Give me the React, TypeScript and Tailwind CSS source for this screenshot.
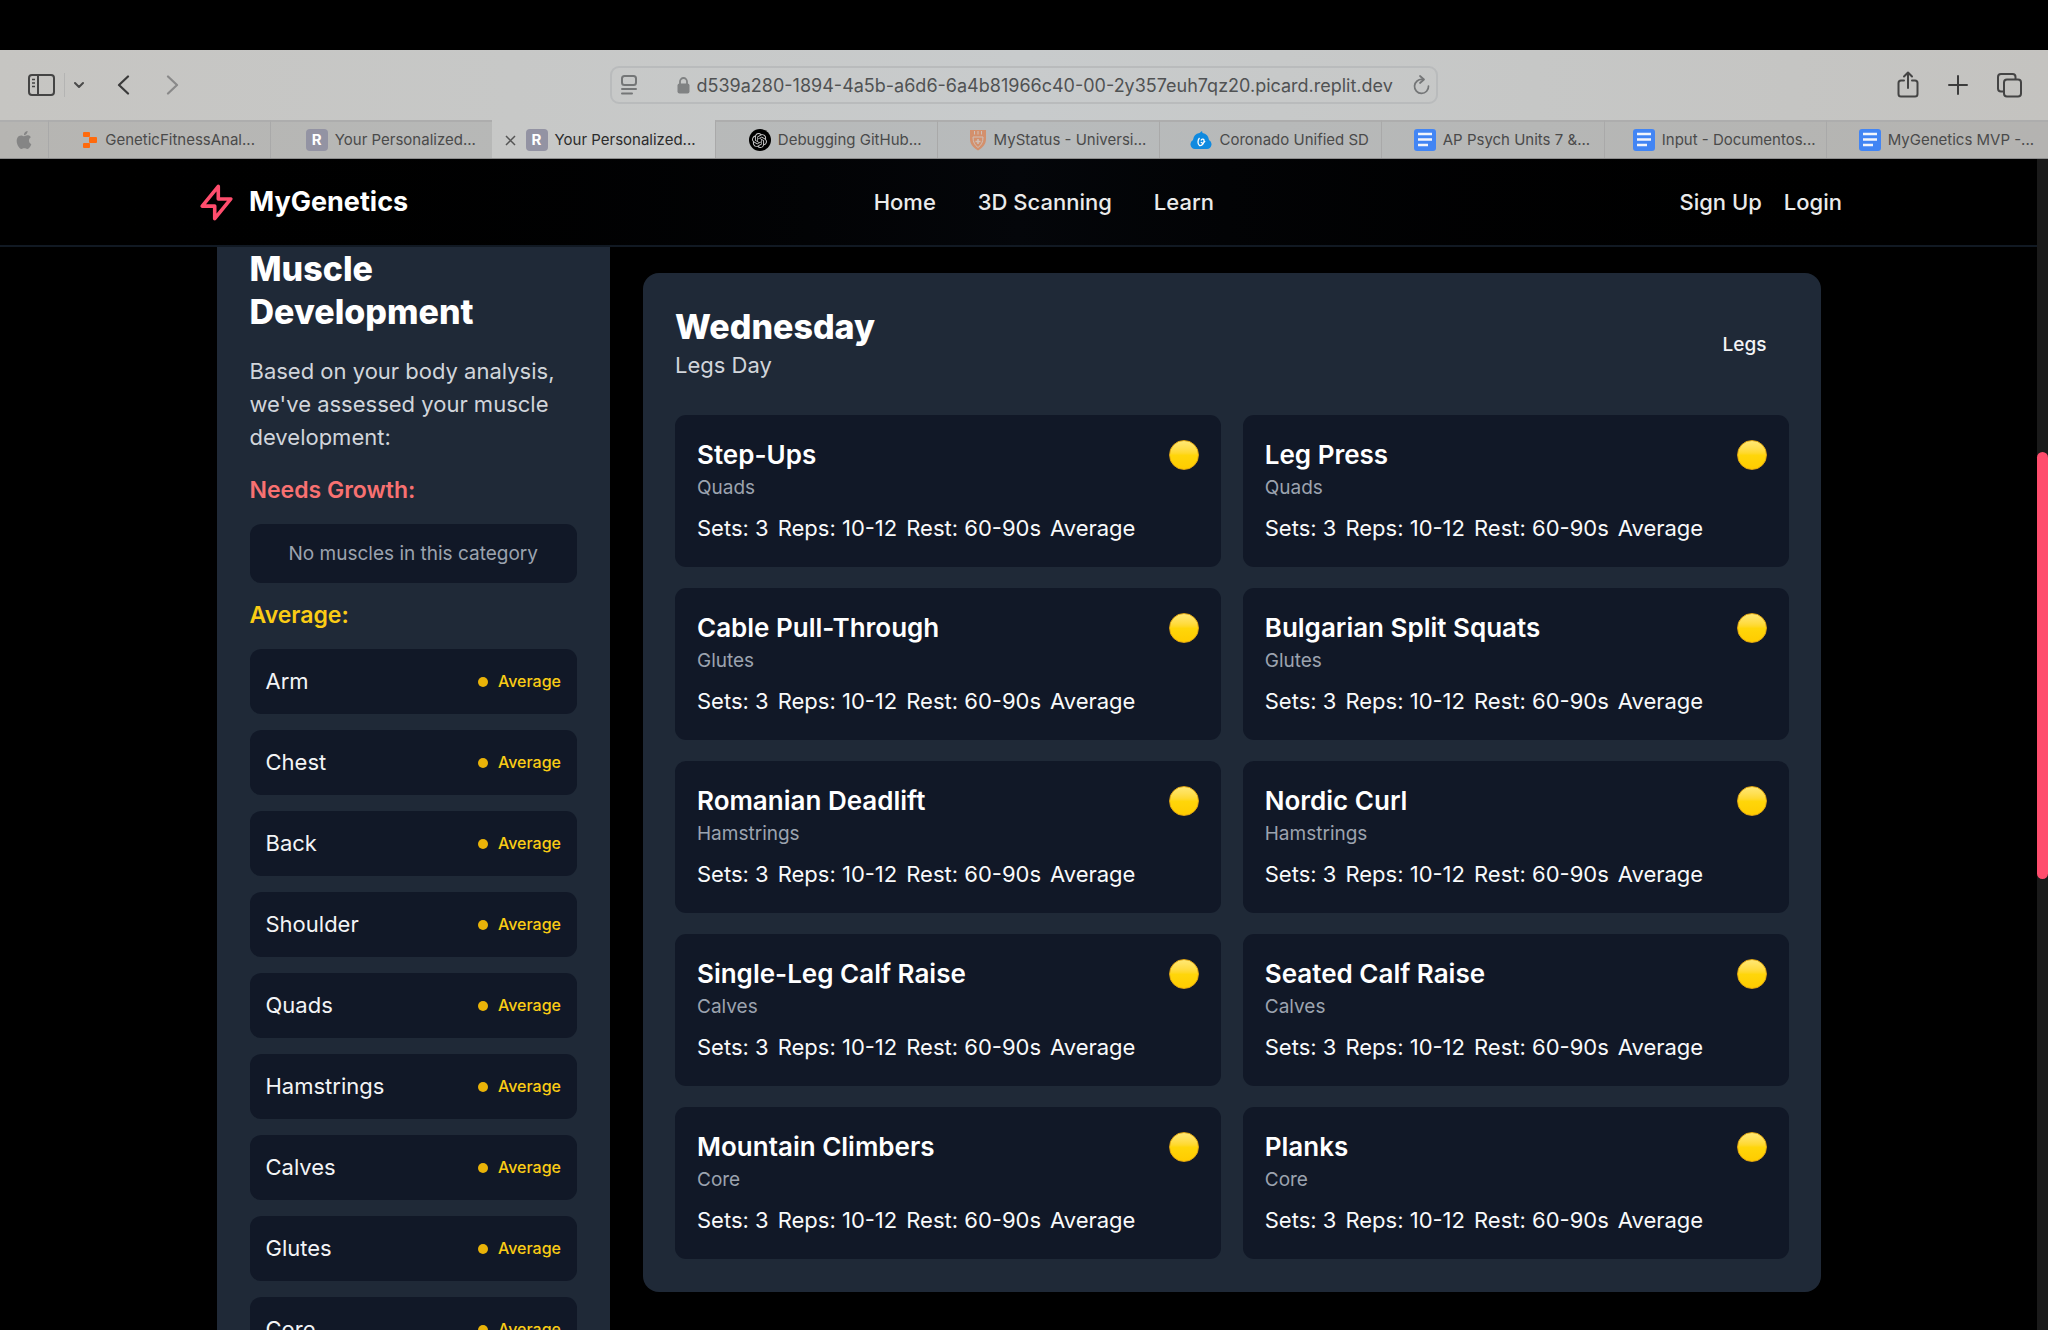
import React from "react";
import { SiOpenai, SiApple } from "react-icons/si";

const inter = "font-['Inter',sans-serif]";

type TabInfo = { icon: string; label: string; active?: boolean };

const tabs: TabInfo[] = [
  { icon: "replit", label: "GeneticFitnessAnal..." },
  { icon: "r", label: "Your Personalized..." },
  { icon: "r", label: "Your Personalized...", active: true },
  { icon: "openai", label: "Debugging GitHub..." },
  { icon: "shield", label: "MyStatus - Universi..." },
  { icon: "cloud", label: "Coronado Unified SD" },
  { icon: "doc", label: "AP Psych Units 7 &..." },
  { icon: "doc", label: "Input - Documentos..." },
  { icon: "doc", label: "MyGenetics MVP -..." },
];

function Favicon({ kind }: { kind: string }) {
  if (kind === "replit")
    return (
      <svg className="h-[22px] w-[16px] shrink-0" viewBox="0 0 16 22" fill="#ff6a0d">
        <rect x="1" y="3" width="7" height="5" rx="1" />
        <rect x="7" y="8" width="8" height="6" rx="1" />
        <rect x="1" y="14" width="7" height="5" rx="1" />
      </svg>
    );
  if (kind === "r")
    return (
      <span className="flex h-[22px] w-[22px] shrink-0 items-center justify-center rounded-[4px] bg-[#9393a3] text-[15px] font-bold text-white">
        R
      </span>
    );
  if (kind === "openai")
    return (
      <span className="flex h-[22px] w-[22px] shrink-0 items-center justify-center rounded-full bg-black text-[#c9c9ca]">
        <SiOpenai className="h-[15px] w-[15px]" />
      </span>
    );
  if (kind === "shield")
    return (
      <svg className="h-[22px] w-[18px] shrink-0" viewBox="0 0 18 22">
        <path d="M1 1h16v9c0 6-4 9-8 11.500c-4-2.500-8-5.500-8-11.500z" fill="#d3906c" />
        <path d="M5.500 2v3.500M9 2v3.500M12.500 2v3.500M4 8h10c0 5-1.500 8-5 10.500c-3.500-2.500-5-5.500-5-10.500z" fill="none" stroke="#cfc0b8" strokeWidth="1" />
        <path d="M9 10v5M6.500 12.500h5" stroke="#cfc0b8" strokeWidth="1.500" />
      </svg>
    );
  if (kind === "cloud")
    return (
      <svg className="h-[20px] w-[22px] shrink-0" viewBox="0 0 22 20">
        <path d="M5 19a4.800 4.800 0 0 1-2-9A8 8 0 0 1 9.500 3L12 1l.5 2a7.500 7.500 0 0 1 6.500 7A4.800 4.800 0 0 1 17 19z" fill="#0f8ae0" />
        <path d="M9.500 8c-2 2-2 6 0 7.500c3 .5 5-3 4.500-5.500c-.5-1.500-2.500-1-3 .5M11 12c1 2 3 1 4-1" fill="none" stroke="#fff" strokeWidth="1.300" />
      </svg>
    );
  return (
    <svg className="h-[22px] w-[22px] shrink-0" viewBox="0 0 22 22">
      <rect width="22" height="22" rx="3" fill="#4285f4" />
      <path d="M4 5h14M4 10.500h14M4 16h10" stroke="#f3f5fb" strokeWidth="2.600" />
    </svg>
  );
}

function Browser() {
  const btn = "flex items-center justify-center shrink-0";
  return (
    <div className="bg-linear-to-r from-[#c6c5c2] via-[#c8cbcc] to-[#c4c3c0] text-[#3c3c3c]">
      <div className="grid h-[70px] grid-cols-[1fr_828px_1fr] items-center">
        <div className="flex items-center pl-[28px]">
          <button aria-label="Show sidebar" className={btn}>
            <svg className="h-[22px] w-[27px]" viewBox="0 0 27 22" fill="none" stroke="#444" strokeWidth="2">
              <rect x="1" y="1" width="25" height="20" rx="3" />
              <path d="M10 1v20" />
              <path d="M4 5.500h3M4 9h3M4 12.500h3" strokeWidth="1.500" />
            </svg>
          </button>
          <span className="ml-[9px] h-6 w-px bg-[#b4b4b3]" />
          <button aria-label="Sidebar menu" className={btn + " ml-[9px]"}>
            <svg className="h-[8px] w-[10px]" viewBox="0 0 10 8" fill="none" stroke="#4a4a4a" strokeWidth="2" strokeLinecap="round" strokeLinejoin="round">
              <path d="M1 2L5 6L9 2" />
            </svg>
          </button>
          <button aria-label="Back" className={btn + " ml-[33px]"}>
            <svg className="h-[20px] w-[13px]" viewBox="0 0 13 20" fill="none" stroke="#3a3a3a" strokeWidth="2.200" strokeLinecap="round" strokeLinejoin="round">
              <path d="M11 1.500L2 10L11 18.500" />
            </svg>
          </button>
          <button aria-label="Forward" className={btn + " ml-[36px]"}>
            <svg className="h-[20px] w-[13px]" viewBox="0 0 13 20" fill="none" stroke="#898989" strokeWidth="2.200" strokeLinecap="round" strokeLinejoin="round">
              <path d="M2 1.500L11 10L2 18.500" />
            </svg>
          </button>
        </div>
        <div className="flex h-[38px] items-center rounded-[9px] border-2 border-[#b9bbbc] pr-[6px] pl-[8px]">
          <button aria-label="Reader" className={btn}>
            <svg className="h-[20px] w-[18px]" viewBox="0 0 18 20" fill="none" stroke="#747677" strokeWidth="2" strokeLinecap="round">
              <rect x="2" y="1" width="14" height="9" rx="2.500" />
              <path d="M2 14h14M2 18.500h10" />
            </svg>
          </button>
          <div className="flex flex-1 items-center justify-center gap-[7px] pl-[26px]">
            <svg className="h-[18px] w-[13px] shrink-0" viewBox="0 0 13 18">
              <path d="M3 9V5.500a3.500 3.500 0 0 1 7 0V9" fill="none" stroke="#808283" strokeWidth="1.800" />
              <rect x="0.500" y="7.500" width="12" height="10" rx="2" fill="#808283" />
            </svg>
            <input
              aria-label="Address"
              readOnly
              value="d539a280-1894-4a5b-a6d6-6a4b81966c40-00-2y357euh7qz20.picard.replit.dev"
              className="w-[704px] bg-transparent text-[18px] text-[#505253] outline-none"
            />
          </div>
          <button aria-label="Reload" className={btn}>
            <svg className="h-[20px] w-[17px]" viewBox="0 0 17 20" fill="none" stroke="#747677" strokeWidth="1.700" strokeLinecap="round" strokeLinejoin="round">
              <path d="M9.500 4.500A7 7 0 1 0 15.500 11" />
              <path d="M7 1l4 3.500L7 8" />
            </svg>
          </button>
        </div>
        <div className="flex items-center justify-end gap-[29px] pr-[26px]">
          <button aria-label="Share" className={btn}>
            <svg className="h-[28px] w-[22px]" viewBox="0 0 22 28" fill="none" stroke="#444" strokeWidth="2" strokeLinecap="round" strokeLinejoin="round">
              <path d="M7 9.500H4a2.500 2.500 0 0 0-2.500 2.500v11A2.500 2.500 0 0 0 4 25.500h14a2.500 2.500 0 0 0 2.500-2.500V12A2.500 2.500 0 0 0 18 9.500h-3" />
              <path d="M11 17V2M7 5.500L11 1.500L15 5.500" />
            </svg>
          </button>
          <button aria-label="New tab" className={btn}>
            <svg className="h-[20px] w-[20px]" viewBox="0 0 20 20" fill="none" stroke="#3c3c3c" strokeWidth="2" strokeLinecap="round">
              <path d="M10 1v18M1 10h18" />
            </svg>
          </button>
          <button aria-label="Tab overview" className={btn}>
            <svg className="h-[25px] w-[25px]" viewBox="0 0 25 25" fill="none" stroke="#444" strokeWidth="2" strokeLinejoin="round">
              <rect x="7" y="6.500" width="17" height="17" rx="3" />
              <path d="M7 18.500H4A3 3 0 0 1 1 15.500V4A3 3 0 0 1 4 1h11.500a3 3 0 0 1 3 3v2.500" />
            </svg>
          </button>
        </div>
      </div>
      <div className="flex h-[39px] border-b border-[#8d8d8d] text-[15px]">
        <button aria-label="Apple" className="flex w-[48px] shrink-0 items-center justify-center border-t-2 border-[#aeaeae] bg-black/8 text-[#858585]">
          <SiApple className="h-[18px] w-[18px]" />
        </button>
        <div className="grid min-w-0 flex-1 grid-cols-9">
          {tabs.map((t, i) => (
            <button
              key={i}
              className={
                "flex min-w-0 items-center justify-center gap-[7px] whitespace-nowrap border-l border-t-2 " +
                (t.active
                  ? "border-transparent pr-[8px] text-[#2c2c2c]"
                  : "border-l-[#a9a9a9] border-t-[#adadad] bg-black/8 pl-[18px] text-[#4a4a4a]")
              }
            >
              {t.active && (
                <svg className="mr-[3px] h-[11px] w-[11px] shrink-0" viewBox="0 0 11 11" stroke="#555" strokeWidth="1.500">
                  <path d="M1 1l9 9M10 1l-9 9" />
                </svg>
              )}
              <Favicon kind={t.icon} />
              <span>{t.label}</span>
            </button>
          ))}
        </div>
      </div>
    </div>
  );
}

function Nav() {
  return (
    <header className="border-b-2 border-[#111923] bg-linear-to-r from-black via-[#04060a] to-black">
      <div className="mx-auto flex h-[86px] max-w-[1647px] items-center justify-between text-[22px] font-medium text-[#ebebeb]">
        <a href="#" className="flex items-center gap-[11px]">
          <svg className="h-[43px] w-[43px]" viewBox="0 0 24 24" fill="none" stroke="#ff4d6d" strokeWidth="2" strokeLinecap="round" strokeLinejoin="round">
            <path d="M13 10V3L4 14h7v7l9-11h-7z" />
          </svg>
          <span className="text-[27px] font-bold text-white">MyGenetics</span>
        </a>
        <nav className="flex gap-[42px]">
          <a href="#">Home</a>
          <a href="#">3D Scanning</a>
          <a href="#">Learn</a>
        </nav>
        <div className="flex gap-[22px]">
          <a href="#">Sign Up</a>
          <a href="#">Login</a>
        </div>
      </div>
    </header>
  );
}

const muscles = ["Arm", "Chest", "Back", "Shoulder", "Quads", "Hamstrings", "Calves", "Glutes", "Core"];

function Sidebar() {
  return (
    <aside className="w-1/4 bg-[#1f2937] px-[33px] pb-8">
      <h2 className="text-[34px] leading-[43px] font-extrabold text-white">
        Muscle
        <br />
        Development
      </h2>
      <p className="mt-[22px] text-[22px] leading-[33px] text-[#d1d5db]">Based on your body analysis, we've assessed your muscle development:</p>
      <h3 className="mt-5 text-[23px] leading-[32px] font-semibold text-[#f87171]">Needs Growth:</h3>
      <p className="mt-[18px] rounded-[11px] bg-[#111827] py-4 text-center text-[19px] leading-[27px] text-[#9ca3af]">No muscles in this category</p>
      <h3 className="mt-4 text-[23px] leading-[32px] font-semibold text-[#facc15]">Average:</h3>
      <ul className="mt-[18px] flex flex-col gap-4">
        {muscles.map((m) => (
          <li key={m} className="flex items-center justify-between rounded-[11px] bg-[#111827] p-4 text-[22px] leading-[33px] text-[#f3f4f6]">
            <span>{m}</span>
            <span className="flex items-center gap-[10px] text-[16px] font-medium text-[#facc15]">
              <span className="h-[10px] w-[10px] rounded-full bg-[#eab308]" />
              Average
            </span>
          </li>
        ))}
      </ul>
    </aside>
  );
}

const exercises = [
  ["Step-Ups", "Quads"],
  ["Leg Press", "Quads"],
  ["Cable Pull-Through", "Glutes"],
  ["Bulgarian Split Squats", "Glutes"],
  ["Romanian Deadlift", "Hamstrings"],
  ["Nordic Curl", "Hamstrings"],
  ["Single-Leg Calf Raise", "Calves"],
  ["Seated Calf Raise", "Calves"],
  ["Mountain Climbers", "Core"],
  ["Planks", "Core"],
];

function Exercise({ name, group }: { name: string; group: string }) {
  return (
    <article className="rounded-[11px] bg-[#111827] p-[22px]">
      <div className="flex items-start justify-between">
        <div>
          <h3 className="text-[26px] leading-[36px] font-semibold text-white">{name}</h3>
          <p className="text-[19px] leading-[29px] text-[#9ca3af]">{group}</p>
        </div>
        <span className="mt-[3px] h-[30px] w-[30px] rounded-full border border-[#e0a512] bg-linear-to-b from-[#ffe873] via-[#ffd60a] to-[#ffcc00]" />
      </div>
      <p className="mt-[10px] flex gap-[9px] text-[22px] leading-[33px] text-[#f9fafb]">
        <span>Sets: 3</span>
        <span>Reps: 10-12</span>
        <span>Rest: 60-90s</span>
        <span>Average</span>
      </p>
    </article>
  );
}

function Day() {
  return (
    <section className="mt-[26px] w-3/4 self-start rounded-[16px] bg-[#1f2937] px-8 py-[33px]">
      <div className="mb-[33px] flex items-center justify-between">
        <div>
          <h2 className="text-[34px] leading-[42px] font-extrabold text-white">Wednesday</h2>
          <p className="text-[22px] leading-[34px] text-[#d1d5db]">Legs Day</p>
        </div>
        <span className="px-[22px] text-[19px] leading-[27px] font-medium text-[#f3f4f6]">Legs</span>
      </div>
      <div className="grid grid-cols-2 gap-x-[22px] gap-y-[21px]">
        {exercises.map(([n, g]) => (
          <Exercise key={n} name={n} group={g} />
        ))}
      </div>
    </section>
  );
}

export default function App() {
  return (
    <div className={"h-screen overflow-hidden bg-black pt-[50px] antialiased " + inter}>
      <Browser />
      <div className="flex">
        <div className="min-w-0 flex-1">
          <Nav />
          <main className="mx-auto flex max-w-[1604px] gap-[33px]">
            <Sidebar />
            <Day />
          </main>
        </div>
        <div className="w-[11px] bg-[#1a1a1a] pt-[293px]">
          <div className="h-[427px] rounded-full bg-[#ff4d6d]" />
        </div>
      </div>
    </div>
  );
}
